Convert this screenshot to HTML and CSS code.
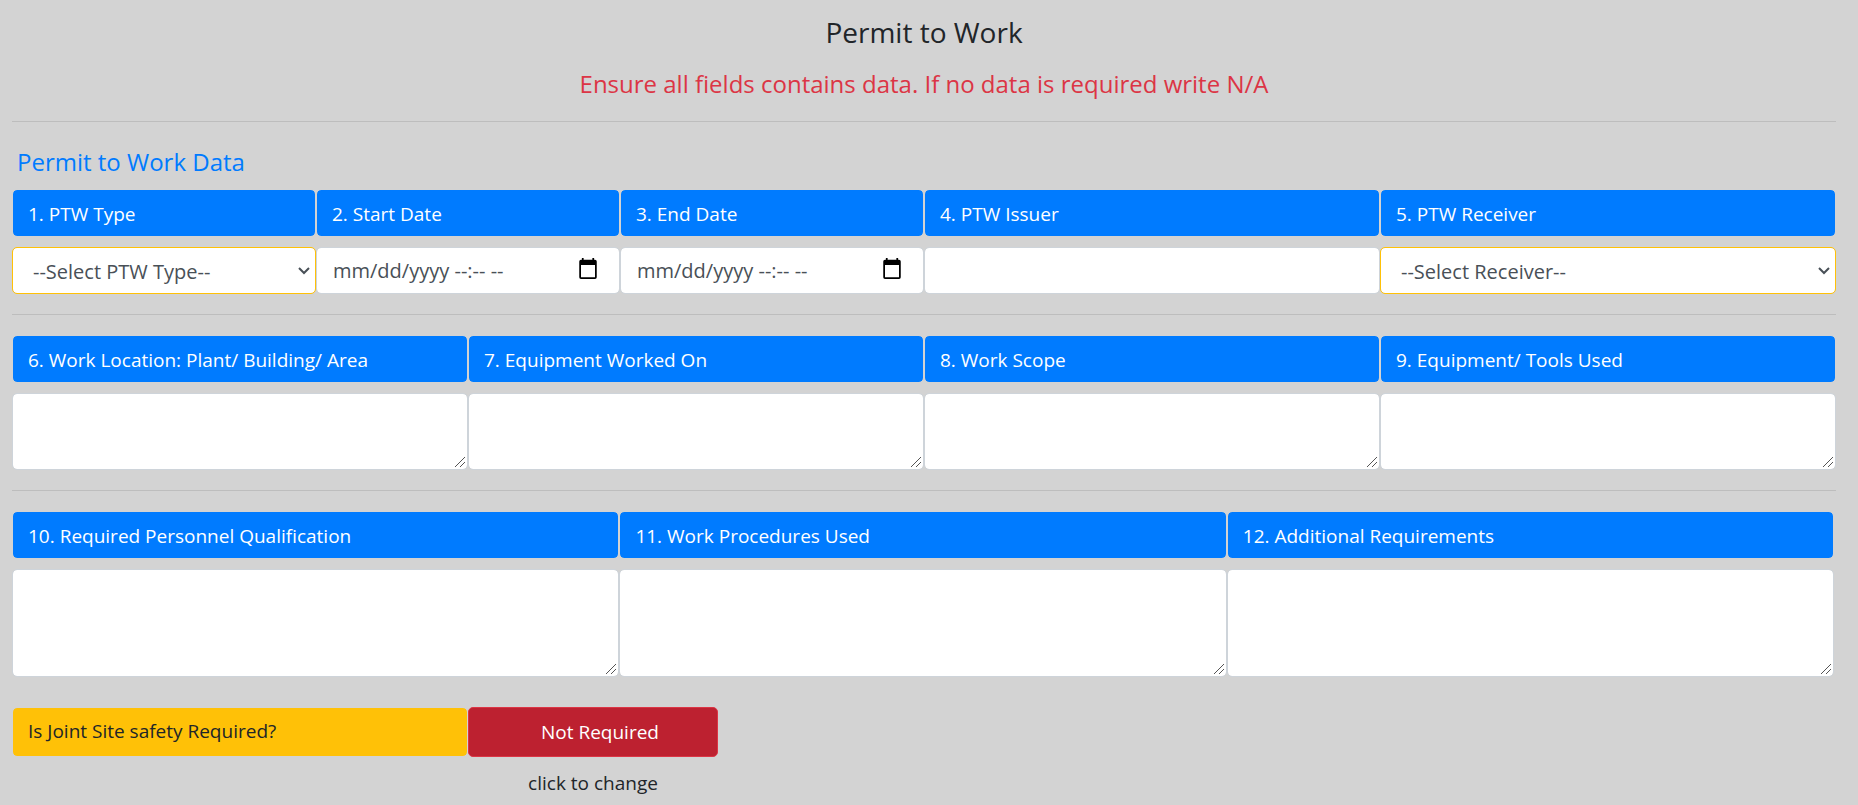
FILE: index.html
```html
<!DOCTYPE html>
<html lang="en">
<head>
    <meta charset="utf-8">
    <title>Permit to Work</title>
    <meta name="viewport" content="width=device-width, initial-scale=1">
    <link rel="stylesheet" href="styles.css">
</head>
<body>
    <form class="container">
        <h1 class="title">Permit to Work</h1>
        <p class="warning">Ensure all fields contains data. If no data is required write N/A</p>
        <hr>

        <h2 class="section-title">Permit to Work Data</h2>
        <div class="row">
            <div class="field col-2">
                <label class="field-label" for="ptwType">1. PTW Type</label>
                <select class="control select" id="ptwType">
                    <option>--Select PTW Type--</option>
                </select>
            </div>
            <div class="field col-2">
                <label class="field-label" for="startDate">2. Start Date</label>
                <div class="control date">
                    <input class="date-input" type="text" id="startDate" placeholder="mm/dd/yyyy --:-- --">
                    <button class="date-button" type="button" aria-label="Pick start date">
                        <svg width="20" height="24" viewBox="0 0 20 24">
                            <path d="M3 0h2v2h10V0h2v2h1q2 0 2 2v18q0 2-2 2H2q-2 0-2-2V4q0-2 2-2h1zM2 8v14h16V8z" fill="#000" fill-rule="evenodd"/>
                        </svg>
                    </button>
                </div>
            </div>
            <div class="field col-2">
                <label class="field-label" for="endDate">3. End Date</label>
                <div class="control date">
                    <input class="date-input" type="text" id="endDate" placeholder="mm/dd/yyyy --:-- --">
                    <button class="date-button" type="button" aria-label="Pick end date">
                        <svg width="20" height="24" viewBox="0 0 20 24">
                            <path d="M3 0h2v2h10V0h2v2h1q2 0 2 2v18q0 2-2 2H2q-2 0-2-2V4q0-2 2-2h1zM2 8v14h16V8z" fill="#000" fill-rule="evenodd"/>
                        </svg>
                    </button>
                </div>
            </div>
            <div class="field col-3">
                <label class="field-label" for="issuer">4. PTW Issuer</label>
                <input class="control" type="text" id="issuer">
            </div>
            <div class="field col-3">
                <label class="field-label" for="receiver">5. PTW Receiver</label>
                <select class="control select" id="receiver">
                    <option>--Select Receiver--</option>
                </select>
            </div>
        </div>
        <hr>

        <div class="row">
            <div class="field col-3">
                <label class="field-label" for="location">6. Work Location: Plant/ Building/ Area</label>
                <textarea class="control area" id="location"></textarea>
            </div>
            <div class="field col-3">
                <label class="field-label" for="equipment">7. Equipment Worked On</label>
                <textarea class="control area" id="equipment"></textarea>
            </div>
            <div class="field col-3">
                <label class="field-label" for="scope">8. Work Scope</label>
                <textarea class="control area" id="scope"></textarea>
            </div>
            <div class="field col-3">
                <label class="field-label" for="tools">9. Equipment/ Tools Used</label>
                <textarea class="control area" id="tools"></textarea>
            </div>
        </div>
        <hr>

        <div class="row">
            <div class="field col-4">
                <label class="field-label" for="qualification">10. Required Personnel Qualification</label>
                <textarea class="control area area-tall" id="qualification"></textarea>
            </div>
            <div class="field col-4">
                <label class="field-label" for="procedures">11. Work Procedures Used</label>
                <textarea class="control area area-tall" id="procedures"></textarea>
            </div>
            <div class="field col-4">
                <label class="field-label" for="additional">12. Additional Requirements</label>
                <textarea class="control area area-tall" id="additional"></textarea>
            </div>
        </div>

        <div class="row safety">
            <label class="safety-label col-3" for="jointSafety">Is Joint Site safety Required?</label>
            <div class="safety-toggle">
                <button class="btn-danger" type="button" id="jointSafety">Not Required</button>
                <span class="hint">click to change</span>
            </div>
        </div>
    </form>

    <script>
        const safetyButton = document.getElementById('jointSafety');
        safetyButton.addEventListener('click', function () {
            const required = safetyButton.classList.toggle('is-required');
            safetyButton.textContent = required ? 'Required' : 'Not Required';
        });
    </script>
</body>
</html>
```
FILE: styles.css
```css
* {
    box-sizing: border-box;
}
body {
    margin: 0;
    background-color: #d3d3d3;
    color: #212529;
    font-family: "Segoe UI", "Open Sans", sans-serif;
    font-size: 19px;
    line-height: 30px;
}
.container {
    padding: 12px 22px 0 12px;
}
.title {
    margin: 0 0 15px;
    font-size: 28px;
    font-weight: 400;
    line-height: 40px;
    text-align: center;
}
.warning {
    margin: 0;
    color: #dc3545;
    font-size: 24px;
    line-height: 34px;
    text-align: center;
}
hr {
    margin: 20px 0;
    border: 0;
    border-top: 1px solid #bdbdbd;
}
.section-title {
    margin: 0;
    padding: 0 5px 7px;
    color: #007bff;
    font-size: 24px;
    font-weight: 400;
    line-height: 40px;
}
.row {
    display: flex;
}
.field {
    display: flex;
    flex-direction: column;
    gap: 10px;
    min-width: 0;
}
.col-2 {
    width: 16.6667%;
}
.col-3 {
    width: 25%;
}
.col-4 {
    width: 33.3%;
}
.field-label {
    padding: 9px 15px 7px;
    border: 1px solid #d3d3d3;
    border-radius: 5px;
    background-color: #007bff;
    background-clip: padding-box;
    color: #fff;
}
.control {
    width: 100%;
    height: 47px;
    padding: 8px 15px 7px;
    border: 1px solid #ced4da;
    border-radius: 5px;
    background-color: #fff;
    background-clip: padding-box;
    color: #495057;
    font: inherit;
    font-size: 20px;
}
.select {
    appearance: none;
    padding: 8px 20px 6px;
    border-color: #ffc107;
    background-image: url("data:image/svg+xml,%3Csvg xmlns='http://www.w3.org/2000/svg' width='12' height='8'%3E%3Cpath d='M1 1l5 5 5-5' fill='none' stroke='%23495057' stroke-width='2'/%3E%3C/svg%3E");
    background-repeat: no-repeat;
    background-position: right 5px center;
}
.date {
    display: flex;
    align-items: center;
    padding: 0 21px 0 16px;
}
.date-input {
    flex: 1;
    min-width: 0;
    padding: 0;
    border: 0;
    background: none;
    color: inherit;
    font: inherit;
}
.date-input::placeholder {
    color: inherit;
    opacity: 1;
}
.date-button {
    display: flex;
    padding: 0 0 4px;
    border: 0;
    background: none;
    cursor: pointer;
}
.date-button svg {
    height: 21px;
}
.area {
    display: block;
    height: 77px;
    resize: vertical;
}
.area::-webkit-resizer {
    background: url("data:image/svg+xml,%3Csvg xmlns='http://www.w3.org/2000/svg' width='15' height='15'%3E%3Cpath d='M3 13L13 3M8 13l5-5' stroke='%23555'/%3E%3C/svg%3E") no-repeat right bottom;
}
.area-tall {
    height: 108px;
}
.safety {
    align-items: flex-start;
    margin-top: 30px;
}
.safety-label {
    padding: 8px 15px 10px;
    border: 1px solid #d3d3d3;
    border-radius: 5px;
    background-color: #ffc107;
    background-clip: padding-box;
}
.safety-toggle {
    display: flex;
    flex-direction: column;
    gap: 11px;
    width: 250px;
    text-align: center;
}
.btn-danger {
    padding: 9px 15px 9px 29px;
    border: 1px solid #dc3545;
    border-radius: 5px;
    background-color: #bd2130;
    color: #fff;
    font: inherit;
    cursor: pointer;
}
.btn-danger.is-required {
    border-color: #28a745;
    background-color: #1e7e34;
}
.hint {
    display: block;
}
```
